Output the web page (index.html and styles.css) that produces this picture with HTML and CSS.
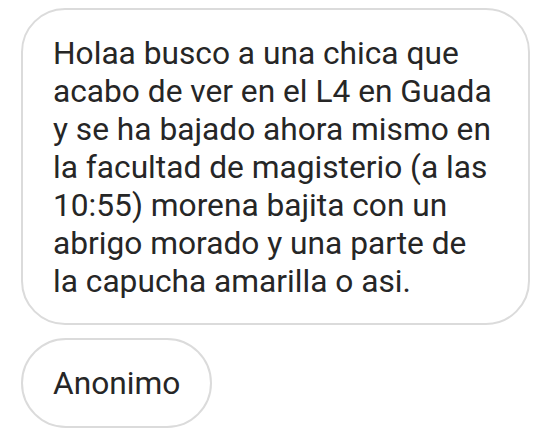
FILE: index.html
```html
<!DOCTYPE html>
<html lang="es">
<head>
<meta charset="utf-8">
<title>Mensaje</title>
<link rel="stylesheet" href="styles.css">
</head>
<body>
<main class="thread">
  <div class="bubble message">Holaa busco a una chica que acabo de ver en el L4 en Guada y se ha bajado ahora mismo en la facultad de magisterio (a las 10:55) morena bajita con un abrigo morado y una parte de la capucha amarilla o asi.</div>
  <div class="bubble sender">Anonimo</div>
</main>
</body>
</html>
```

FILE: styles.css
```css
html, body {
  margin: 0;
  padding: 0;
  background: #ffffff;
}

body {
  font-family: Roboto, "Noto Sans", sans-serif;
  color: #262626;
}

.thread {
  display: flex;
  flex-direction: column;
  align-items: flex-start;
  gap: 13px;
  padding: 8px 0 0 21px;
}

.bubble {
  box-sizing: border-box;
  background: #ffffff;
  border: 2px solid #dbdbdb;
  font-size: 31.7px;
  line-height: 38px;
}

.message {
  width: 509px;
  height: 317px;
  border-radius: 44px;
  padding: 25px 32px 0 30px;
}

.sender {
  height: 90px;
  width: 191px;
  border-radius: 45px;
  padding: 2px 30px 0 30px;
  display: flex;
  align-items: center;
}
```
